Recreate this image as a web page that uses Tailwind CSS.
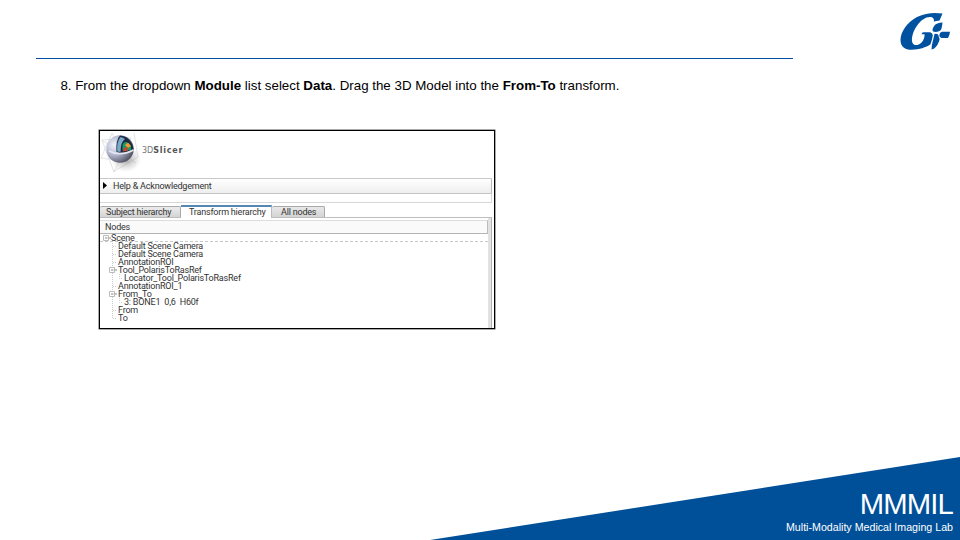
<!DOCTYPE html>
<html lang="en">
<head>
<meta charset="utf-8">
<title>MMMIL</title>
<script src="https://cdn.jsdelivr.net/npm/@tailwindcss/browser@4"></script>
</head>
<body class="w-[960px] h-[540px] overflow-hidden bg-white font-['Liberation_Sans',Arial,sans-serif] text-black">
<main class="relative flex flex-col w-[960px] h-[540px] overflow-hidden">
  <header class="flex h-[59px] justify-between pl-[36px] pr-[9px]">
    <div class="w-[757px] border-b border-[#0052a0]"></div>
    <svg class="mt-[12px] w-[52px] h-[40px]" viewBox="0 0 52 40" fill="#0052a0">
      <path d="M43.500 1.500C36 .4 27 .5 18 5C8 10.500 1.500 20 1.500 28C1.500 35 6.500 38 13 37.800C20 37.600 27 35.500 31.500 32.300C32.500 29.500 33.300 26.500 33.800 23.500C33.500 21.500 32.500 20.500 30.500 20.300H24.500Q23 20.500 22.500 22.300H25.500C26 26 23.500 31.500 18.500 33C14 33.800 12.500 30.500 13 26C14 18 20 8.500 27.500 5.500C32.500 3.800 35.800 5.800 34.800 9.500L40.500 8.500Z"/>
      <path d="M35.500 13.500Q37.500 11 43.500 10.600Q43 17 41.300 18.600Q39.500 20 36.800 20Q33.200 20 33.500 17.500Q34 15.300 35.500 13.500Z"/>
      <path d="M43 19.800H51Q50.500 24 49 26H42.500Q40.200 25.500 40.300 23Q40.800 20 43 19.800Z"/>
      <path d="M35.500 22Q39.300 21 39.700 24.500Q41 26.500 40.200 29Q38.700 33 36.800 35Q35 37 32.500 37.500Q32.500 33 34 28.500Z"/>
    </svg>
  </header>

  <p class="mt-[18px] ml-[60.4px] h-[18px] text-[13.33px] leading-[18.5px] whitespace-nowrap">8. From the dropdown <b>Module</b> list select <b>Data</b>. Drag the 3D Model into the <b>From-To</b> transform.</p>

  <section class="mt-[35px] ml-[99px] flex w-[396px] h-[199px] flex-col overflow-hidden border border-black shadow-[0_0_0_0.5px_#555] font-[Roboto,sans-serif] text-[9px] tracking-[-0.2px] text-[#333] whitespace-nowrap">
    <div class="flex h-[47px] shrink-0">
      <svg class="w-[42px] h-[47px]" viewBox="0 0 42 47">
        <defs>
          <radialGradient id="ball" cx=".3" cy=".35" r=".75"><stop offset="0" stop-color="#f2f3fa"/><stop offset=".5" stop-color="#b0b5cc"/><stop offset="1" stop-color="#4c4c5c"/></radialGradient>
          <radialGradient id="shade"><stop offset="0" stop-color="#777" stop-opacity=".65"/><stop offset="1" stop-color="#999" stop-opacity="0"/></radialGradient>
        </defs>
        <path d="M12 2L1 27L28 31ZM2 9L31 7L14 41ZM34 2L38 26L13 41M2 9L36 32" fill="none" stroke="#dcdcdc" stroke-width=".8"/>
        <ellipse cx="26" cy="28" rx="15" ry="13" fill="url(#shade)"/>
        <circle cx="20" cy="18" r="13.700" fill="url(#ball)"/>
        <path d="M16.500 21Q15.500 9 20 4.500Q31 5.500 33.500 18Q26 23 16.500 21Z" fill="#1b2b43"/>
        <path d="M17.300 20.500Q16.500 10 20.500 6Q23 6.500 25 8Q20.500 11 20.500 21Z" fill="#7cabca"/>
        <path d="M22.500 20V14Q23.500 10.500 26.500 11L31 15L31 19Z" fill="#189a68"/>
        <path d="M25 14L28 11.500L31 15L28 17Z" fill="#ed9a30"/>
        <path d="M23.500 17L27.500 16V20L23 20.500Z" fill="#c3492c"/>
        <path d="M9 20Q20 26 33.500 19" stroke="#e4e6f1" stroke-width="1.500" fill="none"/>
      </svg>
      <div class="mt-[13px] h-[12px] font-['DejaVu_Sans',sans-serif] text-[8px] leading-[13px] tracking-normal text-[#777]">3D<b class="tracking-[0.75px] text-[#555]">Slicer</b></div>
    </div>
    <div class="flex h-[16px] w-[392px] shrink-0 items-center rounded-r-[1px] border-y border-r border-t-[#c8c8c8] border-r-[#b8b8b8] border-b-[#c4c4c4] bg-linear-to-b from-white to-[#eeeeee]">
      <svg class="ml-[3px] -mt-[2px] h-[7px] w-[4px]" viewBox="0 0 4 7"><path d="M0 0L4 3.500L0 7Z" fill="#000"/></svg>
      <span class="ml-[6px] -mt-px leading-[12px]">Help &amp; Acknowledgement</span>
    </div>
    <div class="h-[9px] w-[392px] shrink-0 border-r border-b border-[#d8d8d8]"></div>
    <div class="flex h-[15px] w-[392px] shrink-0 items-end border-b border-[#bcbcbc]">
      <div class="h-[11px] w-[81px] rounded-t-[2px] border-t border-r border-[#aaa] bg-linear-to-b from-[#ececec] to-[#d4d4d4] pl-[6px] leading-[10px]">Subject hierarchy</div>
      <div class="-mb-px h-[13px] w-[91px] border-t-2 border-r border-t-[#5487b4] border-r-[#bbb] bg-white pl-[8px] leading-[10px]">Transform hierarchy</div>
      <div class="h-[11px] w-[53px] rounded-t-[2px] border-t border-r border-[#aaa] bg-linear-to-b from-[#e8e8e8] to-[#d4d4d4] pl-[9px] leading-[10px]">All nodes</div>
    </div>
    <div class="flex grow w-[392px] border-r border-[#b0b0b8]">
      <div class="flex w-[388px] flex-col">
        <div class="mt-[2px] h-[14px] border-t border-b border-t-[#ddd] border-b-[#b4b4b4] border-r border-r-[#bbb] bg-[#fafafa] pl-[5px] leading-[13px]">Nodes</div>
        <div class="relative flex h-[8px] items-center border-b border-dashed border-[#c8c8c8] pl-[11px] leading-[8px]">Scene</div>
        <ul class="relative h-[80px] pl-[18px] leading-[8px]">
          <li>Default Scene Camera</li>
          <li>Default Scene Camera</li>
          <li>AnnotationROI</li>
          <li>Tool_PolarisToRasRef</li>
          <li class="pl-[6px]">Locator_Tool_PolarisToRasRef</li>
          <li>AnnotationROI_1</li>
          <li>From_To</li>
          <li class="whitespace-pre pl-[6px]">3: BONE1  0,6  H60f</li>
          <li>From</li>
          <li>To</li>
          <svg class="absolute left-0 -top-[8px] h-[88px] w-[24px]" viewBox="0 0 24 88" fill="none">
            <path d="M12.500 9V84M13 12.500H17M13 20.500H17M13 28.500H17M13 52.500H17M13 76.500H17M13 84.500H17M19.500 40V44.500H23M19.500 64V68.500H23" stroke="#ccc" stroke-dasharray="1 1"/>
            <path d="M3.500 1.500H8.500V6.500H3.500ZM9.500 33.500H14.500V38.500H9.500ZM9.500 57.500H14.500V62.500H9.500Z" fill="#fff" stroke="#bbb"/>
            <path d="M5 4H7.500M11 36H13.500M11 60H13.500M9 4H11M15 36H17M15 60H17" stroke="#888"/>
          </svg>
        </ul>
      </div>
      <div class="w-[3px] bg-[#e2e2e2]"></div>
    </div>
  </section>

  <footer class="absolute right-0 bottom-0 flex h-[83px] w-[530px] flex-col items-end bg-[#005099] pr-[7px] text-white [clip-path:polygon(100%_0,100%_100%,0_100%)]">
    <div class="mt-[30px] text-[29.3px] leading-[34px] tracking-[-0.9px]">MMMIL</div>
    <div class="-mt-px text-[10.67px] leading-[14px]">Multi-Modality Medical Imaging Lab</div>
  </footer>
</main>
</body>
</html>
